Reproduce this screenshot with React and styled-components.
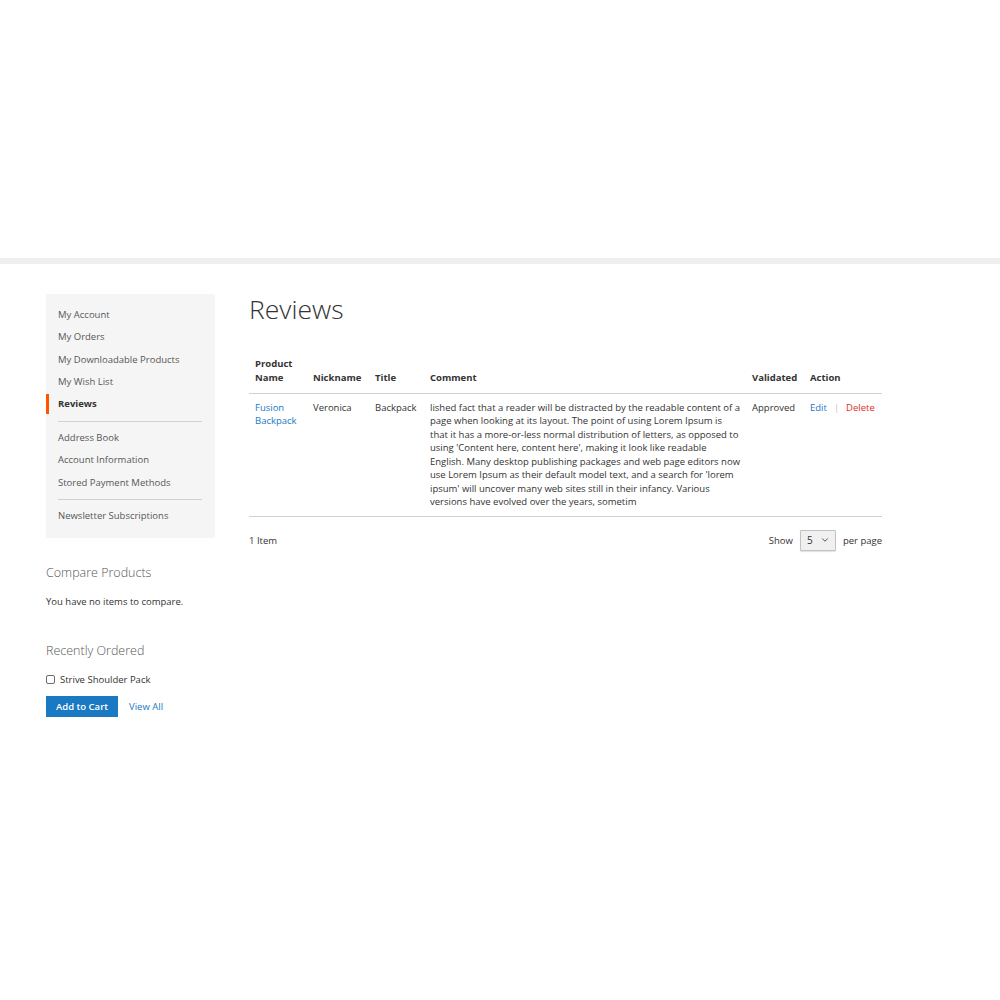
import React from "react";
import styled, { createGlobalStyle } from "styled-components";
import { ChevronDown } from "lucide-react";

const GlobalStyle = createGlobalStyle`
  body {
    margin: 0;
    background: #fff;
    font-family: "Open Sans", "Liberation Sans", sans-serif;
    color: #333;
  }
`;

// Page frame
const Header = styled.div`
  height: 258px;
  background: #fff;
`;

const Band = styled.div`
  height: 6px;
  background: #efefef;
`;

const Columns = styled.div`
  display: flex;
  align-items: flex-start;
  padding: 30px 0 0 46px;
`;

const Sidebar = styled.div`
  width: 169px;
  flex-shrink: 0;
`;

const Main = styled.div`
  width: 633px;
  margin-left: 34px;
`;

// Account navigation
const Nav = styled.ul`
  list-style: none;
  margin: 0;
  padding: 10px 0 10px;
  background: #f5f5f5;
`;

const NavItem = styled.li`
  position: relative;
  height: 22.3px;
  line-height: 22.3px;
  padding-left: 12px;
  font-size: 9.5px;
  font-weight: ${({ $active }) => ($active ? 700 : 400)};
  color: ${({ $active }) => ($active ? "#333" : "#575757")};

  &::before {
    content: "";
    display: ${({ $active }) => ($active ? "block" : "none")};
    position: absolute;
    left: 0;
    top: 1px;
    bottom: 1px;
    width: 3px;
    background: #ff5501;
  }
`;

const NavDivider = styled.li`
  height: 1px;
  margin: 5.5px 13px 5px 12px;
  background: #d1d1d1;
`;

const BlockTitle = styled.div`
  margin-top: ${({ $top }) => $top}px;
  font-size: 12.5px;
  font-weight: 300;
  line-height: 16px;
  color: #575757;
`;

const BlockText = styled.div`
  margin-top: 14px;
  font-size: 9.5px;
  line-height: 14px;
  color: #333;
`;

const CheckRow = styled.label`
  display: flex;
  align-items: center;
  gap: 5px;
  margin-top: 14px;
  font-size: 9.5px;
  line-height: 14px;
  color: #333;
`;

const Check = styled.input`
  appearance: none;
  width: 9px;
  height: 9px;
  margin: 0;
  border: 1px solid #6b6b6b;
  border-radius: 2px;
  background: #fff;
  box-sizing: border-box;
`;

const Actions = styled.div`
  display: flex;
  align-items: center;
  gap: 11px;
  margin-top: 9px;
`;

const PrimaryButton = styled.button`
  width: 72px;
  height: 21px;
  padding: 0;
  border: 1px solid #1979c3;
  border-radius: 0;
  background: #1979c3;
  color: #fff;
  font-family: inherit;
  font-size: 9.5px;
  font-weight: 600;
`;

const Link = styled.a`
  color: ${({ $danger }) => ($danger ? "#e02b27" : "#1979c3")};
  text-decoration: none;
  font-size: 9.5px;
`;

// Main content
const PageTitle = styled.h1`
  margin: 0;
  font-size: 26.5px;
  font-weight: 300;
  line-height: 1.2;
  color: #333;
`;

const Table = styled.table`
  width: 100%;
  margin-top: 25px;
  border-collapse: collapse;
  table-layout: fixed;
  font-size: 9.5px;
`;

const Th = styled.th`
  width: ${({ $w }) => $w}px;
  padding: 6px 6px 8px;
  text-align: left;
  vertical-align: bottom;
  font-weight: 700;
  line-height: 14px;
  border-bottom: 1px solid #d1d1d1;
`;

const Td = styled.td`
  padding: 7px 6px;
  vertical-align: top;
  line-height: 13.5px;
  border-bottom: 1px solid #d1d1d1;
`;

const Sep = styled.span`
  margin: 0 7px;
  color: #c2c2c2;
`;

const Toolbar = styled.div`
  display: flex;
  align-items: center;
  justify-content: space-between;
  margin-top: 13px;
  font-size: 9.5px;
`;

const Limiter = styled.div`
  display: flex;
  align-items: center;
  gap: 7px;
`;

const SelectBox = styled.div`
  display: flex;
  align-items: center;
  justify-content: space-between;
  width: 36px;
  height: 21px;
  box-sizing: border-box;
  padding: 0 5px 0 6px;
  border: 1px solid #c2c2c2;
  border-radius: 1px;
  background: #f0f0f0;
  box-shadow: 0 1px 1px rgba(0, 0, 0, 0.12);
  font-size: 10px;
`;

const NAV = [
  ["My Account"],
  ["My Orders"],
  ["My Downloadable Products"],
  ["My Wish List"],
  ["Reviews", true],
  "-",
  ["Address Book"],
  ["Account Information"],
  ["Stored Payment Methods"],
  "-",
  ["Newsletter Subscriptions"],
];

const COMMENT =
  "lished fact that a reader will be distracted by the readable content of a page when looking at its layout. The point of using Lorem Ipsum is that it has a more-or-less normal distribution of letters, as opposed to using 'Content here, content here', making it look like readable English. Many desktop publishing packages and web page editors now use Lorem Ipsum as their default model text, and a search for 'lorem ipsum' will uncover many web sites still in their infancy. Various versions have evolved over the years, sometim";

export default function App() {
  return (
    <>
      <GlobalStyle />
      <Header />
      <Band />
      <Columns>
        <Sidebar>
          <Nav>
            {NAV.map((item, i) =>
              item === "-" ? (
                <NavDivider key={i} />
              ) : (
                <NavItem key={i} $active={item[1]}>
                  {item[0]}
                </NavItem>
              )
            )}
          </Nav>
          <BlockTitle $top={27}>Compare Products</BlockTitle>
          <BlockText>You have no items to compare.</BlockText>
          <BlockTitle $top={34}>Recently Ordered</BlockTitle>
          <CheckRow>
            <Check type="checkbox" />
            Strive Shoulder Pack
          </CheckRow>
          <Actions>
            <PrimaryButton>Add to Cart</PrimaryButton>
            <Link href="#">View All</Link>
          </Actions>
        </Sidebar>
        <Main>
          <PageTitle>Reviews</PageTitle>
          <Table>
            <thead>
              <tr>
                <Th $w={46}>Product Name</Th>
                <Th $w={50}>Nickname</Th>
                <Th $w={43}>Title</Th>
                <Th $w={310}>Comment</Th>
                <Th $w={46}>Validated</Th>
                <Th $w={66}>Action</Th>
              </tr>
            </thead>
            <tbody>
              <tr>
                <Td>
                  <Link href="#">Fusion Backpack</Link>
                </Td>
                <Td>Veronica</Td>
                <Td>Backpack</Td>
                <Td>{COMMENT}</Td>
                <Td>Approved</Td>
                <Td>
                  <Link href="#">Edit</Link>
                  <Sep>|</Sep>
                  <Link href="#" $danger>
                    Delete
                  </Link>
                </Td>
              </tr>
            </tbody>
          </Table>
          <Toolbar>
            <span>1 Item</span>
            <Limiter>
              <span>Show</span>
              <SelectBox>
                <span>5</span>
                <ChevronDown size={10} strokeWidth={2} color="#333" />
              </SelectBox>
              <span>per page</span>
            </Limiter>
          </Toolbar>
        </Main>
      </Columns>
    </>
  );
}
